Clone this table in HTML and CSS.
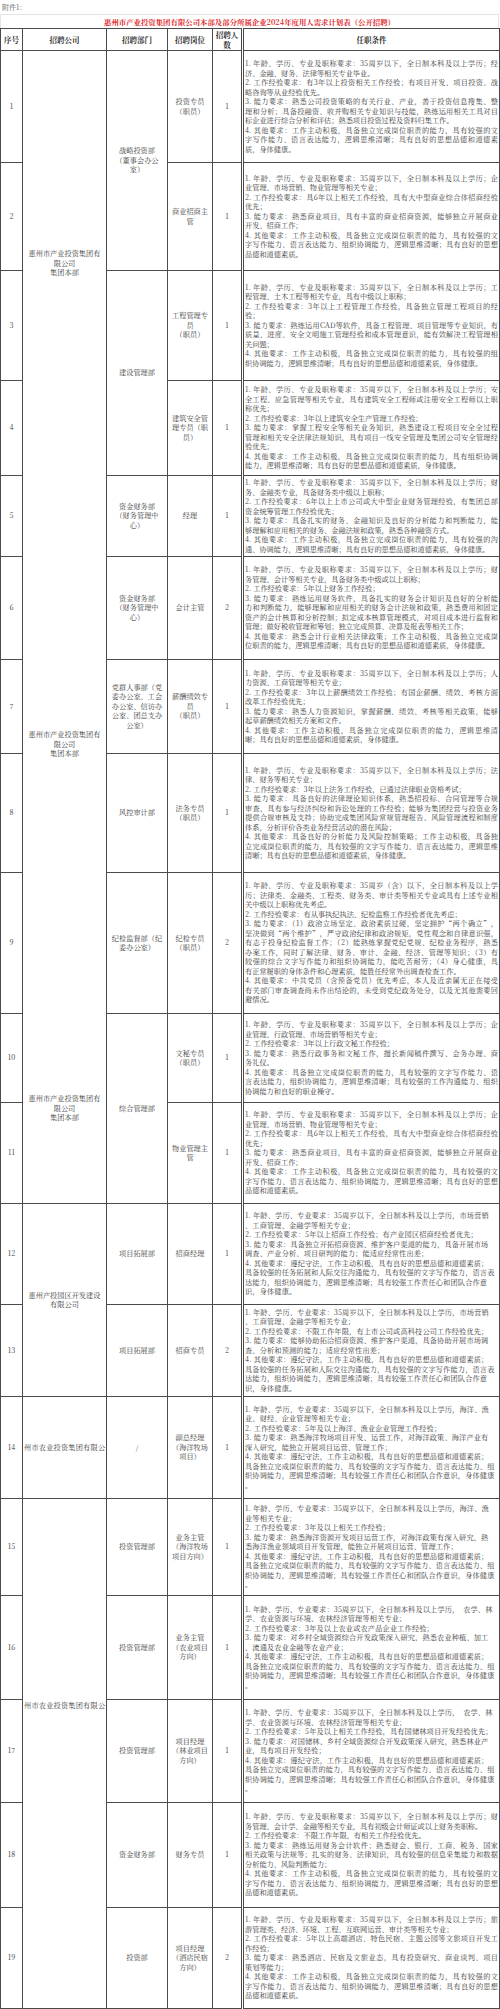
FILE: index.html
```html
<!DOCTYPE html>
<html lang="zh-CN">
<head>
<meta charset="utf-8">
<title>惠州市产业投资集团有限公司本部及部分所属企业2024年度用人需求计划表</title>
<link rel="stylesheet" href="styles.css">
</head>
<body>
<div class="att">附件1：</div>
<div class="title">惠州市产业投资集团有限公司本部及部分所属企业2024年度用人需求计划表（公开招聘）</div>
<table class="tbl">
<colgroup><col class="w1"><col class="w2"><col class="w3"><col class="w4"><col class="w5"><col class="w6"></colgroup>
<thead>
<tr class="hd"><th>序号</th><th>招聘公司</th><th>招聘部门</th><th>招聘岗位</th><th>招聘人<br>数</th><th class="reqh">任职条件</th></tr>
</thead>
<tbody>
<tr class="r1">
<td>1</td>
<td rowspan="4" class="co">惠州市产业投资集团有<br>限公司<br>集团本部</td>
<td rowspan="2">战略投资部<br>（董事会办公<br>室）</td>
<td>投资专员<br>（职员）</td>
<td>1</td>
<td class="req">
<p>1. 年龄、学历、专业及职称要求：35周岁以下，全日制本科及以上学历；经</p>
<p class="e">济、金融、财务、法律等相关专业毕业。</p>
<p>2. 工作经验要求：有3年以上投资相关工作经验；有项目开发、项目投资、战</p>
<p class="e">略咨询等从业经验优先。</p>
<p>3. 能力要求：熟悉公司投资策略的有关行业、产业，善于投资信息搜集、整</p>
<p>理和分析；具备投融资、收并购相关专业知识与技能，熟练运用相关工具对目</p>
<p class="e">标企业进行综合分析和评估；熟悉项目投资过程及资料归集工作。</p>
<p>4. 其他要求：工作主动积极，具备独立完成岗位职责的能力，具有较强的文</p>
<p>字写作能力、语言表达能力，逻辑思维清晰；具有良好的思想品德和道德素</p>
<p class="e">质，身体健康。</p>
</td>
</tr>
<tr class="r2">
<td>2</td>
<td>商业招商主<br>管</td>
<td>1</td>
<td class="req">
<p>1. 年龄、学历、专业及职称要求：35周岁以下，全日制本科及以上学历；企</p>
<p class="e">业管理、市场营销、物业管理等相关专业；</p>
<p>2. 工作经验要求：具6年以上相关工作经验，具有大中型商业综合体招商经验</p>
<p class="e">优先；</p>
<p>3. 能力要求：熟悉商业项目，具有丰富的商业招商资源，能够独立开展商业</p>
<p class="e">开发、招商工作；</p>
<p>4. 其他要求：工作主动积极，具备独立完成岗位职责的能力，具有较强的文</p>
<p>字写作能力、语言表达能力、组织协调能力，逻辑思维清晰；具有良好的思想</p>
<p class="e">品德和道德素质。</p>
</td>
</tr>
<tr class="r3">
<td>3</td>
<td rowspan="2">建设管理部</td>
<td>工程管理专<br>员<br>（职员）</td>
<td>1</td>
<td class="req">
<p>1. 年龄、学历、专业及职称要求：35周岁以下，全日制本科及以上学历；工</p>
<p class="e">程管理、土木工程等相关专业，具有中级以上职称；</p>
<p>2. 工作经验要求：3年以上工程管理工作经验，具备独立管理工程项目的经</p>
<p class="e">验；</p>
<p>3. 能力要求：熟练运用CAD等软件，具备工程管理、项目管理等专业知识，有</p>
<p>质量、进度、安全文明施工管理经验和成本管理意识，能有效解决工程管理相</p>
<p class="e">关问题；</p>
<p>4. 其他要求：工作主动积极，具备独立完成岗位职责的能力，具有较强的组</p>
<p class="e">织协调能力，逻辑思维清晰；具有良好的思想品德和道德素质，身体健康。</p>
</td>
</tr>
<tr class="r4">
<td>4</td>
<td>建筑安全管<br>理专员（职<br>员）</td>
<td>1</td>
<td class="req">
<p>1. 年龄、学历、专业及职称要求：35周岁以下，全日制本科及以上学历；安</p>
<p>全工程、应急管理等相关专业，具有建筑安全工程师或注册安全工程师以上职</p>
<p class="e">称优先；</p>
<p class="e">2. 工作经验要求：3年以上建筑安全生产管理工作经验；</p>
<p>3. 能力要求：掌握工程安全等相关业务知识，熟悉建设工程项目安全全过程</p>
<p>管理和相关安全法律法规知识，具有项目一线安全管理及集团公司安全管理经</p>
<p class="e">验优先；</p>
<p>4. 其他要求：工作主动积极，具备独立完成岗位职责的能力，具有组织协调</p>
<p class="e">能力，逻辑思维清晰；具有良好的思想品德和道德素质，身体健康。</p>
</td>
</tr>
<tr class="r5">
<td>5</td>
<td rowspan="5" class="co nt">惠州市产业投资集团有<br>限公司<br>集团本部</td>
<td>资金财务部<br>（财务管理中<br>心）</td>
<td>经理</td>
<td>1</td>
<td class="req">
<p>1. 年龄、学历、专业及职称要求：35周岁以下，全日制本科及以上学历；财</p>
<p class="e">务、金融类专业，具备财务类中级以上职称；</p>
<p>2. 工作经验要求：6年以上上市公司或大中型企业财务管理经验，有集团总部</p>
<p class="e">资金统筹管理工作经验优先；</p>
<p>3. 能力要求：具备扎实的财务、金融知识及良好的分析能力和判断能力，能</p>
<p class="e">够理解和应用相关的财务、金融法规和政策，熟悉各种融资方式。</p>
<p>4. 其他要求：工作主动积极，具备独立完成岗位职责的能力，具有较强的沟</p>
<p class="e">通、协调能力，逻辑思维清晰；具有良好的思想品德和道德素质，身体健康。</p>
</td>
</tr>
<tr class="r6">
<td>6</td>
<td>资金财务部<br>（财务管理中<br>心）</td>
<td>会计主管</td>
<td>2</td>
<td class="req">
<p>1. 年龄、学历、专业及职称要求：35周岁以下，全日制本科及以上学历；财</p>
<p class="e">务管理、会计等相关专业，具备财务类中级或以上职称；</p>
<p class="e">2. 工作经验要求：5年以上财务工作经验；</p>
<p>3. 能力要求：熟练运用财务软件，具备扎实的财务会计知识及良好的分析能</p>
<p>力和判断能力，能够理解和应用相关的财务会计法规和政策，熟悉费用和固定</p>
<p>资产的会计核算和分析控制；拟定成本核算管理模式，对项目成本进行监督和</p>
<p class="e">管理；做好税收管理和筹划；独立完成预算、决算及报表等相关工作；</p>
<p>4. 其他要求：熟悉会计行业相关法律政策；工作主动积极，具备独立完成岗</p>
<p class="e">位职责的能力，逻辑思维清晰；具有良好的思想品德和道德素质，身体健康。</p>
</td>
</tr>
<tr class="r7">
<td>7</td>
<td>党群人事部（党<br>委办公室、工会<br>办公室、信访办<br>公室、团总支办<br>公室）</td>
<td>薪酬绩效专<br>员<br>（职员）</td>
<td>1</td>
<td class="req">
<p>1. 年龄、学历、专业及职称要求：35周岁以下，全日制本科及以上学历；人</p>
<p class="e">力资源、工商管理等相关专业；</p>
<p>2. 工作经验要求：3年以上薪酬绩效工作经验；有国企薪酬、绩效、考核方面</p>
<p class="e">改革工作经验优先；</p>
<p>3. 能力要求：熟悉人力资源知识，掌握薪酬、绩效、考核等相关政策，能够</p>
<p class="e">起草薪酬绩效相关方案和文件。</p>
<p>4. 其他要求：工作主动积极，具备独立完成岗位职责的能力，逻辑思维清</p>
<p class="e">晰；具有良好的思想品德和道德素质，身体健康。</p>
</td>
</tr>
<tr class="r8">
<td>8</td>
<td>风控审计部</td>
<td>法务专员<br>（职员）</td>
<td>1</td>
<td class="req">
<p>1. 年龄、学历、专业及职称要求：35周岁以下，全日制本科及以上学历；法</p>
<p class="e">律、财务等相关专业；</p>
<p class="e">2. 工作经验要求：3年以上法务工作经验，已通过法律职业资格考试；</p>
<p>3. 能力要求：具备良好的法律理论知识体系，熟悉招投标、合同管理等合规</p>
<p>审查，具有参与经济纠纷和诉讼处理的工作经验；能够为集团经营与投资业务</p>
<p>提供合规审核及支持；协助完成集团风险常规管理报告、风险管理流程和制度</p>
<p class="e">体系，分析评价各类业务经营活动的潜在风险；</p>
<p>4. 其他要求：具备良好的分析能力及风险控制策略；工作主动积极，具备独</p>
<p>立完成岗位职责的能力，具有较强的文字写作能力、语言表达能力，逻辑思维</p>
<p class="e">清晰；具有良好的思想品德和道德素质，身体健康。</p>
</td>
</tr>
<tr class="r9">
<td>9</td>
<td>纪检监督部（纪<br>委办公室）</td>
<td>纪检专员<br>（职员）</td>
<td>2</td>
<td class="req">
<p>1. 年龄、学历、专业及职称要求：35周岁（含）以下，全日制本科及以上学</p>
<p>历；法律类、金融类、工程类、财务类、审计类等相关专业或具有上述专业相</p>
<p class="e">关中级以上职称优先考虑。</p>
<p class="e">2. 工作经验要求：有从事执纪执法、纪检监察工作经验者优先考虑；</p>
<p>3. 能力要求：（1）政治立场坚定、政治素质过硬，坚定拥护“两个确立”，</p>
<p>坚决做到“两个维护”，严守政治纪律和政治规矩，党性观念和自律意识强，</p>
<p>有志于投身纪检监督工作；（2）能熟练掌握党纪党规、纪检业务程序，熟悉</p>
<p>办案工作，同时了解法律、财务、审计、金融、经济、管理等知识；（3）有</p>
<p>较强的综合文字写作能力和组织协调能力，能吃苦耐劳；（4）身心健康，具</p>
<p class="e">有正常履职的身体条件和心理素质，能胜任经常外出调查检查工作。</p>
<p>4. 其他要求：中共党员（含预备党员）优先考虑，本人及近亲属无正在接受</p>
<p>有关部门审查调查尚未作出结论的，未受到党纪政务处分，以及无其他需要回</p>
<p class="e">避情况。</p>
</td>
</tr>
<tr class="r10">
<td>10</td>
<td rowspan="2" class="co nt">惠州市产业投资集团有<br>限公司<br>集团本部</td>
<td rowspan="2">综合管理部</td>
<td>文秘专员<br>（职员）</td>
<td>1</td>
<td class="req">
<p>1. 年龄、学历、专业及职称要求：35周岁以下，全日制本科及以上学历；企</p>
<p class="e">业管理、行政管理、市场营销等相关专业；</p>
<p class="e">2. 工作经验要求：3年以上行政文秘工作经验；</p>
<p>3. 能力要求：熟悉行政事务和文秘工作，擅长新闻稿件撰写、会务办理、商</p>
<p class="e">务礼仪。</p>
<p>4. 其他要求：具备独立完成岗位职责的能力，具有较强的文字写作能力、语</p>
<p>言表达能力，组织协调能力，逻辑思维清晰；具有较强的工作沟通能力、组织</p>
<p class="e">协调能力和良好的职业操守。</p>
</td>
</tr>
<tr class="r11">
<td>11</td>
<td>物业管理主<br>管</td>
<td>1</td>
<td class="req">
<p>1. 年龄、学历、专业及职称要求：35周岁以下，全日制本科及以上学历；企</p>
<p class="e">业管理、市场营销、物业管理等相关专业；</p>
<p>2. 工作经验要求：具6年以上相关工作经验，具有大中型商业综合体招商经验</p>
<p class="e">优先；</p>
<p>3. 能力要求：熟悉商业项目，具有丰富的商业招商资源，能够独立开展商业</p>
<p class="e">开发、招商工作；</p>
<p>4. 其他要求：工作主动积极，具备独立完成岗位职责的能力，具有较强的文</p>
<p>字写作能力、语言表达能力、组织协调能力，逻辑思维清晰；具有良好的思想</p>
<p class="e">品德和道德素质。</p>
</td>
</tr>
<tr class="r12">
<td>12</td>
<td rowspan="2" class="co">惠州产投园区开发建设<br>有限公司</td>
<td>项目拓展部</td>
<td>招商经理</td>
<td>1</td>
<td class="req rag">
<p>1. 年龄、学历、专业要求：35周岁以下，全日制本科及以上学历，市场营销</p>
<p>、工商管理、金融学等相关专业；</p>
<p>2. 工作经验要求：5年以上招商工作经验；有产业园区招商经验者优先；</p>
<p>3. 能力要求：具备独立开拓招商资源、维护客户渠道的能力，具备开展市场</p>
<p>调查、产业分析、项目研判的能力；能适应经常性出差；</p>
<p>4. 其他要求：遵纪守法，工作主动积极，具有良好的思想品德和道德素质；</p>
<p>具备较强的任务拓展和人际交往沟通能力，具有较强的文字写作能力，语言表</p>
<p>达能力，组织协调能力，逻辑思维清晰；具有较强工作责任心和团队合作意</p>
<p>识，身体健康。</p>
</td>
</tr>
<tr class="r13">
<td>13</td>
<td>项目拓展部</td>
<td>招商专员</td>
<td>2</td>
<td class="req rag">
<p>1. 年龄、学历、专业要求：35周岁以下，全日制本科及以上学历，市场营销</p>
<p>、工商管理、金融学等相关专业；</p>
<p>2. 工作经验要求：不限工作年限，有上市公司或高科技公司工作经验优先；</p>
<p>3. 能力要求：能够协助拓洽招商资源、维护客户渠道，具备协助开展市场调</p>
<p>查、分析和预测的能力；适应经常性出差；</p>
<p>4. 其他要求：遵纪守法，工作主动积极，具有良好的思想品德和道德素质；</p>
<p>具备较强的任务拓展和人际交往沟通能力，具有较强的文字写作能力，语言表</p>
<p>达能力，组织协调能力，逻辑思维清晰；具有较强工作责任心和团队合作意</p>
<p>识，身体健康。</p>
</td>
</tr>
<tr class="r14">
<td>14</td>
<td class="co"><div class="one">州市农业投资集团有限公</div></td>
<td>/</td>
<td>副总经理<br>（海洋牧场<br>项目）</td>
<td>1</td>
<td class="req rag">
<p>1. 年龄、学历、专业要求：35周岁以下，全日制本科及以上学历，海洋、渔</p>
<p>业、财经、企业管理等相关专业；</p>
<p>2. 工作经验要求：5年及以上海洋、渔业企业管理工作经验；</p>
<p>3. 能力要求：熟悉海洋牧场项目开发、运营工作，对海洋政策、海洋产业有</p>
<p>深入研究，能独立开展项目运营、管理工作；</p>
<p>4. 其他要求：遵纪守法，工作主动积极，具有良好的思想品德和道德素质；</p>
<p>具备独立完成岗位职责的能力，具有较强的文字写作能力、语言表达能力、组</p>
<p>织协调能力，逻辑思维清晰；具有较强工作责任心和团队合作意识，身体健康</p>
<p>。</p>
</td>
</tr>
<tr class="r15">
<td>15</td>
<td rowspan="5" class="co top"><div class="one low">州市农业投资集团有限公</div></td>
<td>投资管理部</td>
<td>业务主管<br>（海洋牧场<br>项目方向）</td>
<td>1</td>
<td class="req rag">
<p>1. 年龄、学历、专业要求：35周岁以下，全日制本科及以上学历，海洋、渔</p>
<p>业等相关专业；</p>
<p>2. 工作经验要求：3年及以上相关工作经验；</p>
<p>3. 能力要求：熟悉海洋资源开发项目运营工作，对海洋政策有深入研究，熟</p>
<p>悉海洋渔业领域项目开发管理，能独立开展项目运营、管理工作；</p>
<p>4. 其他要求：遵纪守法，工作主动积极，具有良好的思想品德和道德素质；</p>
<p>具备独立完成岗位职责的能力，具有较强的文字写作能力、语言表达能力、组</p>
<p>织协调能力，逻辑思维清晰；具有较强工作责任心和团队合作意识，身体健康</p>
<p>。</p>
</td>
</tr>
<tr class="r16">
<td>16</td>
<td>投资管理部</td>
<td>业务主管<br>（农业项目<br>方向）</td>
<td>1</td>
<td class="req rag">
<p>1. 年龄、学历、专业要求：35周岁以下，全日制本科及以上学历，　农学、林</p>
<p>学、农业资源与环境、农林经济管理等相关专业；</p>
<p>2. 工作经验要求：3年及以上农业或农产品企业工作经验；</p>
<p>3. 能力要求：对乡村全域资源综合开发政策深入研究，熟悉农业种植、加工</p>
<p>、流通及农业金融等农业产业；</p>
<p>4. 其他要求：遵纪守法，工作主动积极，具有良好的思想品德和道德素质；</p>
<p>具备独立完成岗位职责的能力，具有较强的文字写作能力、语言表达能力、组</p>
<p>织协调能力，逻辑思维清晰；具有较强工作责任心和团队合作意识，身体健康</p>
<p>。</p>
</td>
</tr>
<tr class="r17">
<td>17</td>
<td>投资管理部</td>
<td>项目经理<br>（林业项目<br>方向）</td>
<td>1</td>
<td class="req rag">
<p>1. 年龄、学历、专业要求：35周岁以下，全日制本科及以上学历，　农学、林</p>
<p>学、农业资源与环境、农林经济管理等相关专业；</p>
<p>2. 工作经验要求：5年及以上相关工作经验，具有国储林项目开发经验优先；</p>
<p>3. 能力要求：对国储林、乡村全域资源综合开发政策深入研究，熟悉林业产</p>
<p>业，具有项目开发经验；</p>
<p>4. 其他要求：遵纪守法，工作主动积极，具有良好的思想品德和道德素质；</p>
<p>具备独立完成岗位职责的能力，具有较强的文字写作能力、语言表达能力、组</p>
<p>织协调能力，逻辑思维清晰；具有较强工作责任心和团队合作意识，身体健康</p>
<p>。</p>
</td>
</tr>
<tr class="r18">
<td>18</td>
<td>资金财务部</td>
<td>财务专员</td>
<td>1</td>
<td class="req">
<p>1. 年龄、学历、专业及职称要求：35周岁以下，全日制本科及以上学历；财</p>
<p class="e">务管理、会计学、金融等相关专业，具有初级会计师证或以上财务类职称。</p>
<p class="e">2. 工作经验要求：不限工作年限，有相关工作经验优先。</p>
<p>3. 能力要求：熟练运用财务会计软件；熟悉财会、银行、工商、税务、国家</p>
<p>相关政策与法规等；扎实的财务、法律知识，具有较强的信息采集能力和数据</p>
<p class="e">分析能力、风险判断能力；</p>
<p>4. 其他要求：工作主动积极，具备独立完成岗位职责的能力，具有较强的文</p>
<p>字写作能力、语言表达能力、组织协调能力，逻辑思维清晰；具有良好的思想</p>
<p class="e">品德和道德素质。</p>
</td>
</tr>
<tr class="r19">
<td>19</td>
<td>投资部</td>
<td>项目经理<br>（酒店民宿<br>方向）</td>
<td>2</td>
<td class="req">
<p>1. 年龄、学历、专业及职称要求：35周岁以下，全日制本科及以上学历；旅</p>
<p class="e">游管理类、经济、环境、工程、互联网运营、审计类等相关专业；</p>
<p>2. 工作经验要求：5年以上高端酒店、特色民宿、主题公园等文旅项目开发工</p>
<p class="e">作经验；</p>
<p>3. 能力要求：熟悉酒店、民宿及文旅业态，具有投资研究、商业谈判、项目</p>
<p class="e">策划等能力；</p>
<p>4. 其他要求：工作主动积极，具备独立完成岗位职责的能力，具有较强的文</p>
<p>字写作能力、语言表达能力、组织协调能力，逻辑思维清晰；具有良好的思想</p>
<p class="e">品德和道德素质。</p>
</td>
</tr>
</tbody>
</table>
</body>
</html>
```
FILE: styles.css
```css
html, body {
  margin: 0;
  padding: 0;
  background: #ffffff;
}
body {
  width: 500px;
  font-family: "Noto Serif CJK SC", "Noto Sans CJK SC", serif;
  color: #3a3a3a;
}
.att {
  height: 14px;
  line-height: 14px;
  font-size: 7px;
  padding-left: 2px;
  color: #555;
}
.title {
  width: 499px;
  height: 14px;
  box-sizing: border-box;
  line-height: 13px;
  text-align: center;
  font-size: 7.4px;
  font-weight: bold;
  color: #e0262a;
  border: 1px solid #e4e4e4;
  border-bottom: none;
}
.tbl {
  border-collapse: collapse;
  table-layout: fixed;
  width: 499px;
  font-size: 7.2px;
  line-height: 9.5px;
}
.w1 { width: 22px; }
.w2 { width: 84px; }
.w3 { width: 61px; }
.w4 { width: 45px; }
.w5 { width: 30px; }
.w6 { width: 257px; }
.tbl th,
.tbl td {
  border: 1px solid #4a4a4a;
  padding: 0 1px;
  text-align: center;
  vertical-align: middle;
}
.tbl th {
  font-size: 7.5px;
  font-weight: bold;
  color: #333;
}
.tbl .reqh,
.tbl .req {
  border-left: 3px double #4a4a4a;
}
.tbl .req {
  text-align: justify;
  padding: 0 1px 0 1px;
}
.req p {
  margin: 0;
  text-align: justify;
  text-align-last: justify;
}
.req p.e {
  text-align-last: left;
}
.req.rag p {
  text-align: left;
  text-align-last: left;
  letter-spacing: 0.15px;
}
.tbl td.nt {
  border-top-style: hidden;
}
.tbl td.top {
  vertical-align: top;
}
.one {
  white-space: nowrap;
  text-align: center;
  letter-spacing: 0.2px;
}
.one.low {
  margin-top: 202px;
}
.hd { height: 22px; }
.r1 { height: 112px; }
.r2 { height: 108px; }
.r3 { height: 110px; }
.r4 { height: 95px; }
.r5 { height: 81px; }
.r6 { height: 103px; }
.r7 { height: 94px; }
.r8 { height: 119px; }
.r9 { height: 141px; }
.r10 { height: 89px; }
.r11 { height: 101px; }
.r12 { height: 101px; }
.r13 { height: 92px; }
.r14 { height: 102px; }
.r15 { height: 97px; }
.r16 { height: 104px; }
.r17 { height: 103px; }
.r18 { height: 105px; }
.r19 { height: 101px; }
```
